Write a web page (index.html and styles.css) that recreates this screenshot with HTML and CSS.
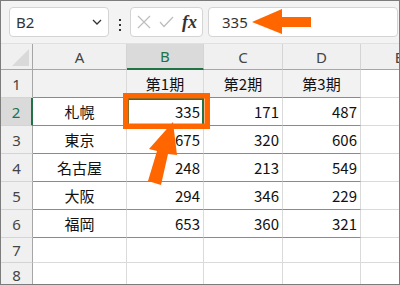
FILE: index.html
```html
<!DOCTYPE html>
<html lang="ja">
<head>
<meta charset="utf-8">
<link rel="stylesheet" href="styles.css">
</head>
<body>
<div class="frame">
  <div class="toolbar">
    <div class="namebox">
      <span class="nb-text">B2</span>
      <svg class="chev" width="10" height="6" viewBox="0 0 10 6"><path d="M1 1 L5 5 L9 1" fill="none" stroke="#333" stroke-width="1.3"/></svg>
    </div>
    <svg class="vdots" width="4" height="14" viewBox="0 0 4 14"><rect x="1" y="1" width="2" height="2" fill="#333"/><rect x="1" y="6" width="2" height="2" fill="#333"/><rect x="1" y="11" width="2" height="2" fill="#333"/></svg>
    <div class="fxbox">
      <svg class="ico" width="14" height="14" viewBox="0 0 14 14"><path d="M1 1 L13 13 M13 1 L1 13" stroke="#bdbdbd" stroke-width="1.2" fill="none"/></svg>
      <svg class="ico" width="15" height="12" viewBox="0 0 15 12"><path d="M1 6 L5 10.5 L14 1" stroke="#bdbdbd" stroke-width="1.2" fill="none"/></svg>
      <span class="fx">fx</span>
    </div>
    <div class="formula">335</div>
  </div>
  <div class="grid">
    <div class="corner"><svg width="18" height="18" viewBox="0 0 18 18"><polygon points="17,0 17,17 0,17" fill="#d9d9d9"/></svg></div>
    <div class="ch">A</div><div class="ch sel">B</div><div class="ch">C</div><div class="ch">D</div><div class="ch">E</div>

    <div class="rh">1</div>
    <div class="c t hd"></div><div class="c t hd ctr">第1期</div><div class="c t hd ctr">第2期</div><div class="c t hd ctr">第3期</div><div class="c"></div>

    <div class="rh rsel">2</div>
    <div class="c t ctr">札幌</div><div class="c t num active">335</div><div class="c t num">171</div><div class="c t num">487</div><div class="c"></div>

    <div class="rh">3</div>
    <div class="c t ctr">東京</div><div class="c t num">675</div><div class="c t num">320</div><div class="c t num">606</div><div class="c"></div>

    <div class="rh">4</div>
    <div class="c t ctr">名古屋</div><div class="c t num">248</div><div class="c t num">213</div><div class="c t num">549</div><div class="c"></div>

    <div class="rh">5</div>
    <div class="c t ctr">大阪</div><div class="c t num">294</div><div class="c t num">346</div><div class="c t num">229</div><div class="c"></div>

    <div class="rh">6</div>
    <div class="c t ctr">福岡</div><div class="c t num">653</div><div class="c t num">360</div><div class="c t num">321</div><div class="c"></div>

    <div class="rh">7</div>
    <div class="c"></div><div class="c"></div><div class="c"></div><div class="c"></div><div class="c"></div>

    <div class="rh">8</div>
    <div class="c"></div><div class="c"></div><div class="c"></div><div class="c"></div><div class="c"></div>
  </div>
  <svg class="overlay" width="400" height="285" viewBox="0 0 400 285">
    <rect x="125.75" y="95.75" width="81.5" height="30.5" fill="none" stroke="#ff6600" stroke-width="5.5"/>
    <polygon points="252,22 282,9 282,17 311,17 311,27 282,27 282,34" fill="#ff6600"/>
    <polygon points="173,122 149,149 157,151 148,181 161,185 168,154 177,155" fill="#ff6600"/>
  </svg>
</div>
</body>
</html>
```
FILE: styles.css
```css
html, body {
  margin: 0;
  padding: 0;
  background: #fff;
}
.frame {
  position: relative;
  width: 400px;
  height: 285px;
  box-sizing: border-box;
  border: 1px solid #7c7c7c;
  overflow: hidden;
  background: #f3f3f3;
  font-family: "Noto Sans CJK JP", "Noto Sans", sans-serif;
}
.toolbar {
  height: 42px;
  box-sizing: border-box;
  padding: 6px 1px 0 8px;
  display: flex;
  align-items: flex-start;
  background: #f3f3f3;
}
.namebox {
  width: 100px;
  height: 30px;
  box-sizing: border-box;
  background: #fff;
  border: 1px solid #d4d4d4;
  border-radius: 4px;
  display: flex;
  align-items: center;
  justify-content: space-between;
  padding: 0 6px 0 6px;
  font-family: "Noto Sans", sans-serif;
  font-size: 15px;
  color: #333;
}
.nb-text { line-height: 1; }
.vdots {
  margin: 11px 8px 0 9px;
}
.fxbox {
  width: 73px;
  height: 30px;
  box-sizing: border-box;
  background: #fff;
  border: 1px solid #d4d4d4;
  border-radius: 4px;
  display: flex;
  align-items: center;
  padding: 0 0 0 6px;
  gap: 8px;
}
.fx {
  font-family: "Liberation Serif", serif;
  font-style: italic;
  font-weight: bold;
  font-size: 18px;
  color: #333;
  line-height: 1;
}
.formula {
  flex: 1;
  margin-left: 5px;
  height: 30px;
  box-sizing: border-box;
  background: #fff;
  border: 1px solid #d4d4d4;
  border-radius: 4px;
  padding-left: 13px;
  display: flex;
  align-items: center;
  font-family: "Noto Sans", sans-serif;
  font-size: 15px;
  color: #333;
}
.grid {
  display: grid;
  grid-template-columns: 32px 94px 77px 79px 78px 77px;
  grid-template-rows: 26px repeat(6, 28px) 25px 25px;
  background: #fff;
  border-top: 1px solid #e0e0e0;
}
.grid > div {
  box-sizing: border-box;
  display: flex;
  align-items: center;
  white-space: nowrap;
  overflow: hidden;
}
.corner {
  background: #f0f0f0;
  border-right: 1px solid #a6a6a6;
  border-bottom: 1px solid #a6a6a6;
  justify-content: flex-end;
  align-items: flex-end !important;
  padding: 0 2px 2px 0;
}
.ch {
  background: #f0f0f0;
  border-right: 1px solid #d4d4d4;
  border-bottom: 1px solid #a6a6a6;
  justify-content: center;
  font-family: "Noto Sans", sans-serif;
  font-size: 15px;
  color: #444;
}
.ch.sel {
  background: #dadada;
  color: #217346;
  border-bottom: 2px solid #217346;
}
.rh {
  background: #f0f0f0;
  border-right: 1px solid #a6a6a6;
  border-bottom: 1px solid #d4d4d4;
  justify-content: center;
  font-family: "Noto Sans", sans-serif;
  font-size: 15px;
  color: #444;
}
.rh.rsel {
  background: #dadada;
  color: #217346;
  border-right: 2px solid #217346;
}
.c {
  border-right: 1px solid #dadada;
  border-bottom: 1px solid #dadada;
  font-size: 15px;
  color: #111;
}
.c.t {
  border-bottom: 1px solid #8a8a8a;
}
.c.hd {
  background: #f2f2f2;
}
.ctr {
  justify-content: center;
}
.num {
  justify-content: flex-end;
  padding-right: 3px;
}
.active {
  outline: 2px solid #217346;
  outline-offset: -2px;
}
.overlay {
  position: absolute;
  left: -1px;
  top: -1px;
  pointer-events: none;
}
```
